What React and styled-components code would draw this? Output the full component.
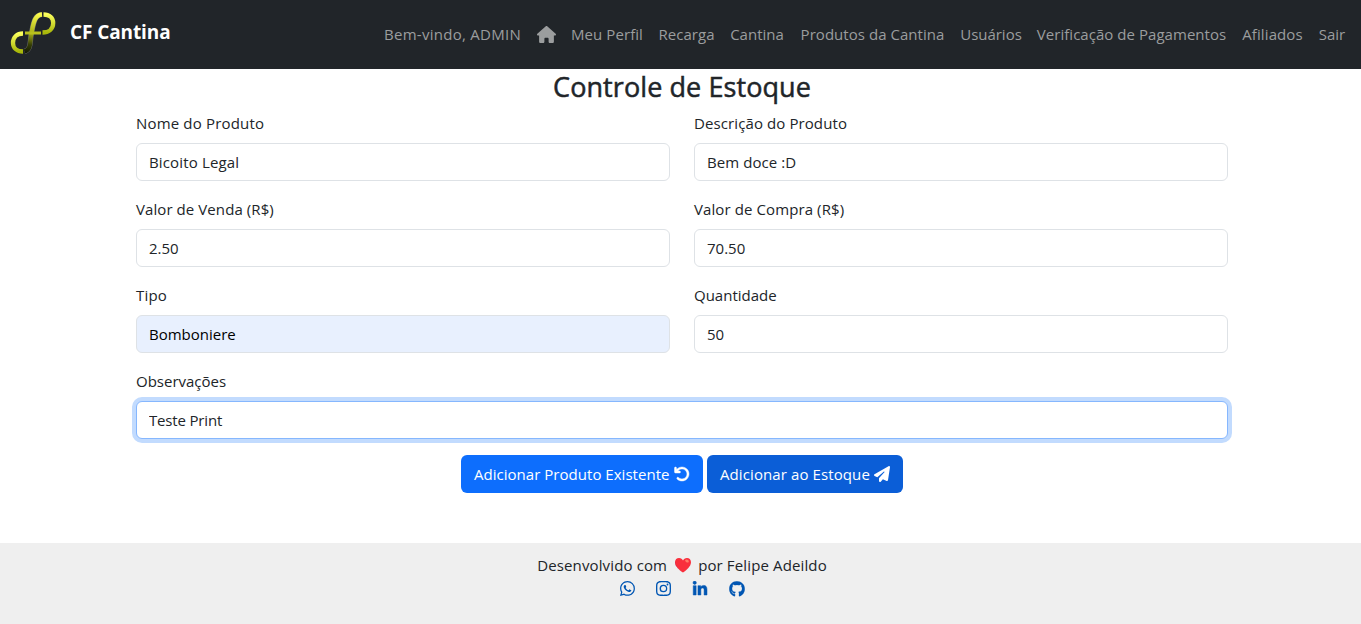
import React from "react";
import styled, { createGlobalStyle } from "styled-components";
import { FaHouse, FaArrowRotateLeft, FaPaperPlane, FaLinkedinIn, FaGithub } from "react-icons/fa6";
import { BsWhatsapp, BsInstagram } from "react-icons/bs";

const GlobalStyle = createGlobalStyle`
  * { box-sizing: border-box; }
  html, body { margin: 0; }
  body {
    font-family: "Open Sans", "Noto Sans", sans-serif;
    font-size: 15px;
    line-height: 24px;
    color: #212529;
    background: #fff;
    overflow: hidden;
  }
`;

const Page = styled.div`
  display: flex;
  flex-direction: column;
  height: 624px;
`;

const Navbar = styled.nav`
  display: flex;
  align-items: center;
  justify-content: space-between;
  height: 69px;
  flex: none;
  padding: 0 8px 0 10px;
  background: #212529;
`;

const Brand = styled.a`
  display: flex;
  align-items: center;
  gap: 14px;
  color: #fff;
  font-size: 19px;
  font-weight: 700;
  letter-spacing: -0.1px;
  padding-bottom: 5px;

  svg { margin-top: 2px; }
`;

const NavList = styled.ul`
  display: flex;
  list-style: none;
  margin: 0;
  padding: 0 0 2px;
`;

const NavItem = styled.li`
  display: flex;
  align-items: center;
  justify-content: center;
  width: ${(p) => p.$w}px;
  letter-spacing: ${(p) => p.$ls || 0}px;
  color: #9b9d9e;
  white-space: nowrap;

  svg { margin-top: 2px; }
`;

const Main = styled.main`
  width: 1092px;
  margin: 0 0 0 136px;
  flex: 1;
`;

const Title = styled.h1`
  margin: 0 0 7px;
  padding-top: 1px;
  height: 35px;
  font-size: 27px;
  line-height: 34px;
  font-weight: 500;
  letter-spacing: 0.08px;
  -webkit-text-stroke: 0.5px #212529;
  text-align: center;
`;

const Form = styled.form`
  display: grid;
  grid-template-columns: 1fr 1fr;
  column-gap: 24px;
  row-gap: 16px;
`;

const Field = styled.label`
  display: flex;
  flex-direction: column;
  gap: 7px;
  grid-column: ${(p) => (p.$wide ? "1 / -1" : "auto")};
`;

const Label = styled.span`
  height: 25px;
  letter-spacing: ${(p) => p.$ls || 0}px;
`;

const Input = styled.input`
  height: 38px;
  padding: 6px 12px;
  font: inherit;
  color: ${(p) => (p.$filled ? "#000" : "#212529")};
  letter-spacing: ${(p) => p.$ls || 0}px;
  border: 1px solid ${(p) => (p.$active ? "#86b7fe" : "#dee2e6")};
  border-radius: 6px;
  background: ${(p) => (p.$filled ? "#e8f0fe" : "#fff")};
  box-shadow: ${(p) => (p.$active ? "0 0 0 4px #c2dbfe" : "none")};
  outline: none;
`;

const Actions = styled.div`
  display: flex;
  justify-content: center;
  gap: 4px;
  margin-top: 16px;
`;

const Button = styled.button`
  display: flex;
  align-items: center;
  justify-content: space-between;
  width: ${(p) => p.$w}px;
  height: 38px;
  padding: 0 13px;
  border: 0;
  border-radius: 6px;
  font: inherit;
  letter-spacing: ${(p) => p.$ls || 0}px;
  white-space: nowrap;
  color: #fff;
  background: ${(p) => (p.$pressed ? "#0b5ed7" : "#0d6efd")};
`;

const UndoIcon = styled(FaArrowRotateLeft)`
  stroke: currentColor;
  stroke-width: 14px;
`;

const Footer = styled.footer`
  height: 81px;
  flex: none;
  padding: 10px 0 0 3px;
  display: flex;
  flex-direction: column;
  align-items: center;
  background: #efefef;
`;

const Credit = styled.div`
  display: flex;
  align-items: center;
  gap: 6.5px;
  letter-spacing: 0.13px;
`;

const Social = styled.div`
  display: flex;
  gap: 21px;
  margin: 4px 0 0;
  color: #0056b3;
`;

const BoldLinkedin = styled(FaLinkedinIn)`
  stroke: currentColor;
  stroke-width: 16px;
`;

const BoldGithub = styled(FaGithub)`
  stroke: currentColor;
  stroke-width: 6px;
`;

const Logo = () => (
  <svg width="46" height="42" viewBox="-1 0 46 42" fill="none">
    <defs>
      <linearGradient id="stem" gradientUnits="userSpaceOnUse" x1="25" y1="1" x2="18" y2="41">
        <stop offset="0" stopColor="#fdfd4c" />
        <stop offset="0.5" stopColor="#a9b116" />
        <stop offset="0.8" stopColor="#343d05" />
        <stop offset="1" stopColor="#141a05" />
      </linearGradient>
      <linearGradient id="loop" x1="0" y1="0" x2="0" y2="1">
        <stop offset="0" stopColor="#fbff5c" />
        <stop offset="1" stopColor="#a9b80a" />
      </linearGradient>
    </defs>
    <path d="M13.500 39.500C21 37 18.500 29 20.500 21C22.500 11 23.500 3 31 2.500" stroke="#6a6c6b" strokeWidth="5.200" />
    <path d="M13.500 39.500C21 37 18.500 29 20.500 21C22.500 11 23.500 3 31 2.500" stroke="url(#stem)" strokeWidth="4.300" />
    <path d="M32.500 2.500C38.500 2.500 42.200 6 42.200 11C42.200 17 37.500 20.500 31.500 20.500" stroke="url(#loop)" strokeWidth="4.300" />
    <path d="M12 21.500C6 21.500 2 25 2 31C2 36 6 39.500 12 39.500" stroke="url(#loop)" strokeWidth="4.300" />
    <path d="M14 21H30" stroke="#b8c01d" strokeWidth="3" />
  </svg>
);

const Heart = () => (
  <svg width="18" height="16" viewBox="0 0 18 16">
    <path d="M9 15.500C6 13.500 1 9.500 1 5.200C1 2.500 2.800 1 5 1C7 1 8.300 2 9 3.500C9.700 2 11 1 13 1C15.200 1 17 2.500 17 5.200C17 9.500 12 13.500 9 15.500Z" fill="#f92f3c" />
    <path d="M1.200 4C1 9 5 12.800 9 15.500C6 13.500 1 9.500 1 5.200Z" fill="#c4124b" />
    <ellipse cx="13" cy="4" rx="2" ry="1.300" fill="#ff7b66" transform="rotate(30 13 4)" />
  </svg>
);

const navItems = [
  ["Bem-vindo, ADMIN", 153, 0.27],
  [<FaHouse key="home" size={19} />, 34],
  ["Meu Perfil", 88, 0.08],
  ["Recarga", 71, 0.05],
  ["Cantina", 70],
  ["Produtos da Cantina", 161, 0.04],
  ["Usuários", 76, -0.02],
  ["Verificação de Pagamentos", 205, 0.04],
  ["Afiliados", 77, 0.1],
  ["Sair", 42],
];

const fields = [
  { label: "Nome do Produto", value: "Bicoito Legal", labelSpacing: 0.17, spacing: 0.15 },
  { label: "Descrição do Produto", value: "Bem doce :D", labelSpacing: 0.1, spacing: 0.08 },
  { label: "Valor de Venda (R$)", value: "2.50", labelSpacing: 0.08 },
  { label: "Valor de Compra (R$)", value: "70.50", labelSpacing: 0.1 },
  { label: "Tipo", value: "Bomboniere", filled: true, labelSpacing: 0.2 },
  { label: "Quantidade", value: "50" },
  { label: "Observações", value: "Teste Print", wide: true, active: true, spacing: -0.17 },
];

export default function App() {
  return (
    <Page>
      <GlobalStyle />
      <Navbar>
        <Brand><Logo />CF Cantina</Brand>
        <NavList>
          {navItems.map(([content, width, ls], i) => (
            <NavItem key={i} $w={width} $ls={ls}>{content}</NavItem>
          ))}
        </NavList>
      </Navbar>
      <Main>
        <Title>Controle de Estoque</Title>
        <Form>
          {fields.map((f) => (
            <Field key={f.label} $wide={f.wide}>
              <Label $ls={f.labelSpacing}>{f.label}</Label>
              <Input defaultValue={f.value} $filled={f.filled} $active={f.active} $ls={f.spacing} />
            </Field>
          ))}
        </Form>
        <Actions>
          <Button $w={242} $ls={0.03}>Adicionar Produto Existente<UndoIcon size={16} /></Button>
          <Button $w={196} $ls={0.1} $pressed>Adicionar ao Estoque<FaPaperPlane size={16} /></Button>
        </Actions>
      </Main>
      <Footer>
        <Credit>Desenvolvido com <Heart /> por Felipe Adeildo</Credit>
        <Social>
          <BsWhatsapp size={15} />
          <BsInstagram size={15} />
          <BoldLinkedin size={16} />
          <BoldGithub size={16} />
        </Social>
      </Footer>
    </Page>
  );
}
